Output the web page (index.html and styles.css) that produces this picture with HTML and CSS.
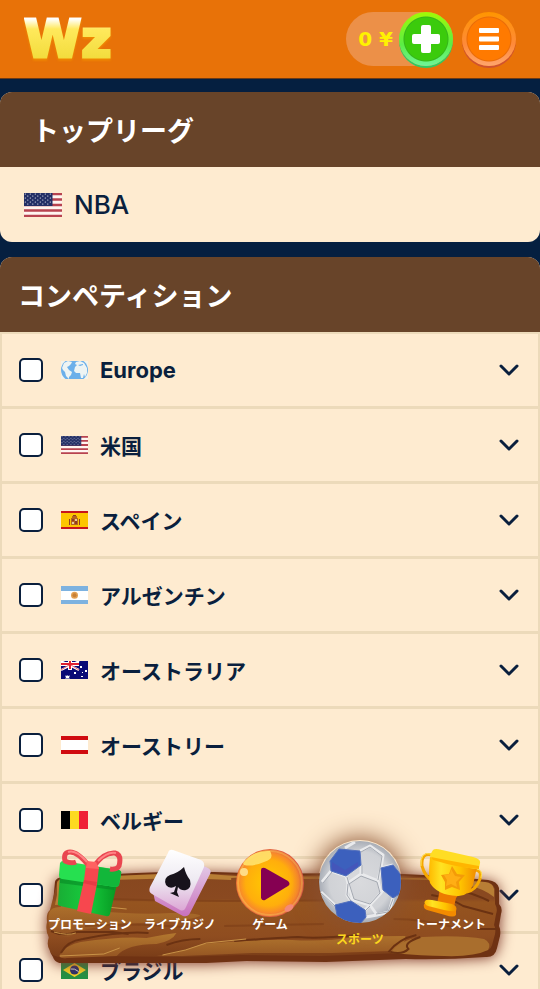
FILE: index.html
```html
<!DOCTYPE html>
<html lang="ja">
<head>
    <meta charset="UTF-8">
    <meta name="viewport" content="width=device-width, initial-scale=1">
    <title>Wz</title>
    <link rel="stylesheet" href="styles.css">
</head>
<body>

<!-- shared icons and flags -->
<svg class="sprite" aria-hidden="true">
    <defs>
        <pattern id="stars" width="5" height="4" patternUnits="userSpaceOnUse">
            <circle cx="1.3" cy="1" r=".6" fill="#fff"/>
            <circle cx="3.8" cy="3" r=".6" fill="#fff"/>
        </pattern>
    </defs>
    <symbol id="chevron" viewBox="0 0 20 12">
        <path d="M2 2l8 8 8-8" fill="none" stroke="#0a1f3d" stroke-width="3" stroke-linecap="round" stroke-linejoin="round"/>
    </symbol>
    <symbol id="flag-us" viewBox="0 0 38 24" preserveAspectRatio="none">
        <path fill="#fff5f0" d="M0 0h38v24H0z"/>
        <path stroke="#b8434f" stroke-width="2.4" d="M0 1h38M0 6.500h38M0 12h38M0 17.500h38M0 23h38"/>
        <path fill="#232f66" d="M0 0h28.500v13H0z"/>
        <path fill="url(#stars)" d="M0 0h28v12H0z"/>
    </symbol>
    <symbol id="flag-eu" viewBox="0 0 27 18">
        <path fill="#f4f3ea" d="M0 0h27v18H0z"/>
        <ellipse cx="13.500" cy="9" rx="13.500" ry="12" fill="#6cb0ea"/>
        <path fill="#eef4f3" d="M1 7L3 2l4-2 4 1-1 2-2 2-2 1 2 3 3 2-1 3-2 2 0 2-3-3-1-4-2-2zM15 1l4-1 4 2 3 5v5l-2 4-1-3-1 4-2 0-1-5-4 0-2-2 1-4 2-2-2-1z"/>
        <path fill="#6cb0ea" d="M17 4l5-1 0 1-3 1z"/>
    </symbol>
    <symbol id="flag-es" viewBox="0 0 27 18">
        <path fill="#c8141b" d="M0 0h27v18H0z"/>
        <path fill="#fdc500" d="M0 2h27v14H0z"/>
        <path fill="#b5651f" d="M10 7h7v7h-7zM11 5h5v2h-5z"/>
        <path fill="#8f3a24" d="M11 8h2v2h-2zM14 10h2v3h-2zM8 8h1v6H8zM18 8h1v6h-1zM12 4h3v1h-3z"/>
        <path fill="#e6c9a0" d="M14 8h2v2h-2zM11 11h2v2h-2z"/>
    </symbol>
    <symbol id="flag-ar" viewBox="0 0 27 18">
        <path fill="#7db2e0" d="M0 0h27v18H0z"/>
        <path fill="#fff" d="M0 5h27v9H0z"/>
        <circle cx="13.500" cy="9.300" r="3.500" fill="#e3a052"/>
        <circle cx="13.500" cy="9.300" r="2" fill="#c98035"/>
    </symbol>
    <symbol id="flag-au" viewBox="0 0 27 18">
        <path fill="#0a0a76" d="M0 0h27v18H0z"/>
        <path stroke="#fff" stroke-width="2" d="M0 0l18 9M18 0L0 9"/>
        <path stroke="#fff" stroke-width="4" d="M9 0v9M0 3h18"/>
        <path stroke="#e02030" stroke-width="2" d="M9 0v8M0 3h18"/>
        <path stroke="#e02030" stroke-width=".7" d="M10 4l8 5M8 4L0 9"/>
        <path fill="#fff" d="M6 14l1 1 2-.500-1 2 1 1H4l1-1-1-2 1.500.500zM13 11h2v2h-2zM19 5h2v2h-2zM24 9h2v2h-2zM20 15h2v1h-2zM21 11h1v1h-1z"/>
    </symbol>
    <symbol id="flag-at" viewBox="0 0 27 18">
        <path fill="#d00b10" d="M0 0h27v18H0z"/>
        <path fill="#fff" d="M0 4h27v10H0z"/>
    </symbol>
    <symbol id="flag-be" viewBox="0 0 27 18">
        <path d="M0 0h9v18H0z"/>
        <path fill="#fdda20" d="M9 0h9v18H9z"/>
        <path fill="#ef2035" d="M18 0h9v18h-9z"/>
    </symbol>
    <symbol id="flag-br" viewBox="0 0 27 18">
        <path fill="#229244" d="M0 0h27v18H0z"/>
        <path fill="#f5d426" d="M2 9l11.500-7L25 9l-11.500 7z"/>
        <circle cx="13.500" cy="9" r="4.500" fill="#26316f"/>
        <path d="M9.500 8q4-1 8 2.500" fill="none" stroke="#dfe8ea"/>
    </symbol>
</svg>

<header class="header">
    <a class="logo" href="#">Wz</a>
    <div class="account">
        <div class="balance">
            <span class="balance-value">0 ¥</span>
            <button class="round-btn deposit" aria-label="入金">
                <svg width="28" height="28" viewBox="0 0 28 28"><path fill="#fff" d="M11 0h6q2 0 2 2v7h7q2 0 2 2v6q0 2-2 2h-7v7q0 2-2 2h-6q-2 0-2-2v-7H2q-2 0-2-2v-6q0-2 2-2h7V2q0-2 2-2z"/></svg>
            </button>
        </div>
        <button class="round-btn menu" aria-label="メニュー">
            <svg width="22" height="22" viewBox="0 0 22 22"><path fill="#fff" d="M2 0h18q1 0 1 1v3q0 1-1 1H2Q1 5 1 4V1q0-1 1-1zM2 8.500h18q1 0 1 1v3q0 1-1 1H2q-1 0-1-1v-3q0-1 1-1zM2 17h18q1 0 1 1v3q0 1-1 1H2q-1 0-1-1v-3q0-1 1-1z"/></svg>
        </button>
    </div>
</header>

<main class="content">
    <section class="card top-leagues">
        <h2 class="card-title">トップリーグ</h2>
        <a class="league" href="#">
            <svg class="league-flag"><use href="#flag-us"/></svg>
            <span>NBA</span>
        </a>
    </section>

    <section class="card">
        <h2 class="card-title">コンペティション</h2>
        <ul class="list">
            <li class="row">
                <label class="country"><input type="checkbox" class="check"><svg class="flag"><use href="#flag-eu"/></svg><span class="latin">Europe</span></label>
                <button class="toggle" aria-label="開く"><svg width="20" height="12"><use href="#chevron"/></svg></button>
            </li>
            <li class="row">
                <label class="country"><input type="checkbox" class="check"><svg class="flag"><use href="#flag-us"/></svg><span>米国</span></label>
                <button class="toggle" aria-label="開く"><svg width="20" height="12"><use href="#chevron"/></svg></button>
            </li>
            <li class="row">
                <label class="country"><input type="checkbox" class="check"><svg class="flag"><use href="#flag-es"/></svg><span>スペイン</span></label>
                <button class="toggle" aria-label="開く"><svg width="20" height="12"><use href="#chevron"/></svg></button>
            </li>
            <li class="row">
                <label class="country"><input type="checkbox" class="check"><svg class="flag"><use href="#flag-ar"/></svg><span>アルゼンチン</span></label>
                <button class="toggle" aria-label="開く"><svg width="20" height="12"><use href="#chevron"/></svg></button>
            </li>
            <li class="row">
                <label class="country"><input type="checkbox" class="check"><svg class="flag"><use href="#flag-au"/></svg><span>オーストラリア</span></label>
                <button class="toggle" aria-label="開く"><svg width="20" height="12"><use href="#chevron"/></svg></button>
            </li>
            <li class="row">
                <label class="country"><input type="checkbox" class="check"><svg class="flag"><use href="#flag-at"/></svg><span>オーストリー</span></label>
                <button class="toggle" aria-label="開く"><svg width="20" height="12"><use href="#chevron"/></svg></button>
            </li>
            <li class="row">
                <label class="country"><input type="checkbox" class="check"><svg class="flag"><use href="#flag-be"/></svg><span>ベルギー</span></label>
                <button class="toggle" aria-label="開く"><svg width="20" height="12"><use href="#chevron"/></svg></button>
            </li>
            <li class="row">
                <label class="country"><input type="checkbox" class="check"></label>
                <button class="toggle" aria-label="開く"><svg width="20" height="12"><use href="#chevron"/></svg></button>
            </li>
            <li class="row">
                <label class="country"><input type="checkbox" class="check"><svg class="flag"><use href="#flag-br"/></svg><span>ブラジル</span></label>
                <button class="toggle" aria-label="開く"><svg width="20" height="12"><use href="#chevron"/></svg></button>
            </li>
        </ul>
    </section>
</main>

<nav class="nav">
    <!-- wooden board -->
    <svg class="board" viewBox="0 0 460 94" preserveAspectRatio="none" aria-hidden="true">
        <defs>
            <linearGradient id="wood" x2="0" y2="1">
                <stop offset="0" stop-color="#87471f"/>
                <stop offset=".3" stop-color="#8a4920"/>
                <stop offset=".34" stop-color="#95541f"/>
                <stop offset=".75" stop-color="#8f4d20"/>
                <stop offset="1" stop-color="#7a3d18"/>
            </linearGradient>
            <linearGradient id="plank" x2="0" y2="1">
                <stop offset="0" stop-color="#b3782f"/>
                <stop offset="1" stop-color="#935322"/>
            </linearGradient>
        </defs>
        <path fill="#6f3213" d="M10 13q0-4 10-6L70 5q60-3 100-2 80 3 150 0l80 4 45 4q9 1 11 8l0 16q4 4 2 10l-2 12q2 4 1 10l-3 12q-2 10-12 9-40 3-80 2l-80 3-80-1-60 3-80-1-40 1q-12 0-14-7-5-6-2-14-4-6-2-16-1-10 3-13z"/>
        <path fill="url(#wood)" d="M12 14q0-4 10-5l48-2q60-3 100-2 80 3 150 0l78 4 44 4q8 1 10 7l0 15q3 5 1 10l-2 11q2 4 1 9l-3 11q-2 7-12 6-40 3-80 2l-80 3-80-1-60 2-80-1-40 1q-10 0-12-6-4-6-1-14-4-6-2-15-1-9 3-12z"/>
        <!-- upper rim -->
        <path fill="#b87e35" d="M12 14q0-4 10-5l48-2q60-3 95-2l12 1 30 2-20 1 0 2-50-2-70 2-30 3-9 10-4 11-14 1 2-10zM398 10l44 3q8 1 9 7l0 8q-10-8-24-11l-29-4z"/>
        <path fill="#a66b2c" d="M207 8l110-1 80 3 0 1-80-1-110 0z"/>
        <!-- left plank end -->
        <path fill="url(#plank)" d="M4 44q2-7 14-6 20 0 36 4 40 4 72 2 30 0 30 3-20 7-60 7-40 2-60 8l-12 6q-10 0-18-6-4-10-2-18z" opacity=".75"/>
        <!-- lower band -->
        <path fill="url(#plank)" d="M14 87q8-12 22-14 40-6 66-4 20-4 30-5-4 8-20 11-30 0-40 12l-50 2q-6 1-8-2zM112 87q20-2 46-12 60-5 90-4 30 2 64-3 20-1 50-1 0 10-14 15l-60 2-80 0-70 3z"/>
        <path fill="#a96e2d" d="M347 84q10-14 32-16 40-2 62 2 8 4 4 11-14 7-44 6-20 0-54-3z"/>
        <path fill="none" stroke="#6b3212" stroke-width="2" d="M6 62q12 6 26 1l36 0 16 2M16 84q6-12 22-14 40-8 66-6M122 76q16-6 34-6M190 72q40-3 64-4 20 2 60-2M345 83q10-13 28-17M347 83q12 3 18-3-6-6 12-12M388 26q20 3 32 11l30 8M412 20q20 5 34 12M434 60l20 0"/>
        <path fill="none" stroke="#7b3d18" stroke-width="2" opacity=".6" d="M60 30q60 2 120 2l160-1M40 57q50-4 110 2M180 57l100-2M350 50q30 0 60 8"/>
        <path fill="none" stroke="#c99347" d="M15 87l44-2 16-6M118 86q24-4 44-12l40-4M16 37l26-1 40 4M9 63q14 4 22 1"/>
    </svg>

    <a class="nav-item" href="#">
        <svg class="nav-icon" viewBox="0 0 68 68">
            <defs>
                <linearGradient id="green"><stop stop-color="#19ad35"/><stop offset=".5" stop-color="#16cc3d"/><stop offset="1" stop-color="#079822"/></linearGradient>
            </defs>
            <path fill="url(#green)" d="M4 26l57 9-7 30q-1 3-4 2L4 57q-3-1-2-4z"/>
            <path fill="#078924" opacity=".6" d="M4 29l55 8-1 4L4 34z"/>
            <path fill="#26e050" d="M7 12l56 9q3 1 2 4l-2 11q-1 2-4 2L6 30q-3-1-3-4l1-12q1-2 3-2z"/>
            <path fill="#12b73a" d="M42 18l21 3q3 1 2 4l-2 11q-1 2-4 2l-19-3z"/>
            <path fill="#f7474e" d="M30 16l13 2-2 17-6 30-14-3 7-31z"/>
            <path fill="#d72d3a" opacity=".5" d="M28 31l13 2-1 4-13-3z"/>
            <path fill="none" stroke="#e94650" stroke-width="5" stroke-linejoin="round" d="M33 17Q22 3 14 3 7 3 9 12q6 3 11 1M38 17Q48 3 59 4q7 2 4 13-2 4-9 3"/>
            <path fill="none" stroke="#ff8384" stroke-width="2" d="M12 3q8-3 19 10M42 12Q52 2 60 4"/>
            <path fill="#ff6161" d="M31 12l9 1 3 7-13-1z"/>
        </svg>
        <span>プロモーション</span>
    </a>
    <a class="nav-item" href="#">
        <svg class="nav-icon" viewBox="0 0 68 68">
            <defs>
                <linearGradient id="card" x2="0" y2="1"><stop stop-color="#fff"/><stop offset=".5" stop-color="#eeeaf2"/><stop offset="1" stop-color="#dca7d5"/></linearGradient>
                <linearGradient id="card-side" x2="0" y2="1"><stop stop-color="#eadff0"/><stop offset="1" stop-color="#c871bc"/></linearGradient>
            </defs>
            <path fill="url(#card-side)" d="M29 4l33 15q4 2 2 6L44 64q-2 4-7 3L9 52l-2-9z"/>
            <path fill="url(#card)" d="M27 1l28 10q4 2 3 7L40 58q-2 5-6 3L6 45q-4-2-2-7L22 4q1-4 5-3z"/>
            <path fill="#17121b" d="M38 18q2 8 6 13 2 8-4 10-5 1-8-3l-1 5 2 5-9-4 4-1 2-6q-6 4-10-1-3-7 4-10 8-2 14-8z"/>
        </svg>
        <span>ライブカジノ</span>
    </a>
    <a class="nav-item" href="#">
        <svg class="nav-icon" viewBox="0 0 68 68">
            <defs>
                <radialGradient id="ball" cx=".48" cy=".5" r=".52"><stop stop-color="#ffcb00"/><stop offset=".65" stop-color="#ffae0c"/><stop offset=".85" stop-color="#f8892b"/><stop offset="1" stop-color="#d95448"/></radialGradient>
            </defs>
            <circle cx="34" cy="34" r="34" fill="url(#ball)"/>
            <circle cx="34" cy="34" r="32" fill="none" stroke="#ffd45a" stroke-width="2" opacity=".4"/>
            <path fill="#ffe36c" opacity=".9" d="M7 14Q17 1 34 2q5 8-6 11-12 5-20 3z"/>
            <circle cx="8" cy="23" r="4" fill="#ffdc86"/>
            <ellipse cx="53" cy="59" rx="5" ry="3" fill="#f38978" transform="rotate(-35 53 59)"/>
            <path fill="#850052" d="M25 21q0-3 4-2l23 13q3 3 0 5L29 51q-3 1-4-2z"/>
        </svg>
        <span>ゲーム</span>
    </a>
    <a class="nav-item active" href="#">
        <svg class="nav-icon" viewBox="0 0 84 84">
            <defs>
                <radialGradient id="soccer"><stop stop-color="#d9dadd"/><stop offset=".75" stop-color="#d0d2d6"/><stop offset="1" stop-color="#a8adb6"/></radialGradient>
                <clipPath id="soccer-clip"><circle cx="42" cy="42" r="41"/></clipPath>
            </defs>
            <circle cx="42" cy="42" r="41" fill="url(#soccer)"/>
            <g clip-path="url(#soccer-clip)" stroke-linejoin="round">
                <path fill="none" stroke="#e9eaec" stroke-width="3" d="M28 36l2 7 13-9 17 7 3 12-11 12-17-5-5-17M43 25v9M42 11l10-5 13 9-2 13-3 12M63 28l12-3M13 31L4 42M13 31l15 5M30 43l-1 12 4 6M35 60l-2 1M17 65L3 52M52 65l-5 5M63 53l2-3M75 58l-4 14-12 3-11 2M52 65l7 10M27 8l10-6"/>
                <path fill="none" stroke="#a3a8b0" d="M29 37l2 7 12-8 16 6 3 11-10 11-16-5-5-16M44 25v9M43 12l9-5 12 9-2 12-2 12M14 32L5 43M30 44l-1 11 4 6M17 66L3 53M52 66l-5 5M75 59l-5 13-12 2"/>
                <path fill="#3c60bd" stroke="#5370bd" d="M12 21l9-12 21 2 1 14-15 11-15-5zM63 28l12-3 8 10v18l-8 5-10-8zM17 65l16-4 14 9 1 7-6 7-22-4z"/>
                <path fill="#5345b5" opacity=".35" d="M14 22l13 8 13-8v4L28 35l-14-5z"/>
            </g>
        </svg>
        <span>スポーツ</span>
    </a>
    <a class="nav-item" href="#">
        <svg class="nav-icon" viewBox="0 0 68 68">
            <defs>
                <linearGradient id="gold"><stop stop-color="#ffba00"/><stop offset=".25" stop-color="#ffe323"/><stop offset=".65" stop-color="#ffc400"/><stop offset="1" stop-color="#f18b00"/></linearGradient>
            </defs>
            <path fill="none" stroke="#f5a700" stroke-width="3" d="M16 6Q5 3 6 17q3 11 11 15M60 21q6 1 4 9-4 11-13 13"/>
            <path fill="none" stroke="#ffe257" d="M15 5Q4 2 5 17M61 20q6 1 4 9"/>
            <path fill="#ed7b00" d="M24 38l21 5-5 6-2 9-17-3 2-10z"/>
            <path fill="url(#gold)" d="M14 8l47 10-4 18q-5 12-16 11-20-1-27-13-2-7 0-26z"/>
            <path fill="#ffdd24" d="M17 1q2-2 9 0l31 7q8 2 7 6l-1 5q-3 2-14-1L20 11q-6-2-6-5z"/>
            <path fill="#ffb500" d="M15 8q20 4 48 9l0 3q-20-1-46-9z"/>
            <path fill="#f49b08" d="M36 17l5 8 8 1-6 7 1 8-8-3-7 3 0-8-4-7 8-1z"/>
            <path fill="#ffae14" d="M35 20l4 7 6 1-5 5 1 5-6-3-5 2 1-6-3-5 6-1z"/>
            <path fill="#f38b00" d="M8 55l32 6v5q-2 3-11 0L11 61q-4-1-3-6z"/>
            <path fill="url(#gold)" d="M9 52q1-2 7-1l20 4q6 2 4 7-3 1-12-1l-16-4q-5-2-3-5z"/>
        </svg>
        <span>トーナメント</span>
    </a>
</nav>

</body>
</html>
```

FILE: styles.css
```css
* {
    box-sizing: border-box;
}
body {
    display: flex;
    flex-direction: column;
    position: relative;
    height: 100vh;
    margin: 0;
    overflow: hidden;
    background: #051f40;
    color: #0a1f3d;
    font-family: Inter, "Noto Sans CJK JP", sans-serif;
}
a {
    color: inherit;
    text-decoration: none;
}
button {
    padding: 0;
    border: 0;
    background: none;
    cursor: pointer;
}
svg {
    display: block;
}
.sprite {
    position: absolute;
    width: 0;
    height: 0;
}

/* header */
.header {
    display: flex;
    flex-shrink: 0;
    align-items: center;
    justify-content: space-between;
    height: 79px;
    padding: 0 24px;
    background: #e87208;
    border-bottom: 1px solid #6b3a17;
}
.logo {
    font-family: "DejaVu Sans", sans-serif;
    font-size: 52px;
    font-weight: 700;
    line-height: 60px;
    color: transparent;
    background: linear-gradient(#fff 10px, #ffe95c 20px, #f2dc3c 50px);
    background-clip: text;
    -webkit-background-clip: text;
    -webkit-text-stroke: 3px transparent;
    filter: drop-shadow(0 2px 1px #f08a00);
}
.account {
    display: flex;
    align-items: center;
    gap: 9px;
}
.balance {
    display: flex;
    align-items: center;
    gap: 6px;
    height: 54px;
    padding-left: 12px;
    border-radius: 27px;
    background: #ec9048;
}
.balance-value {
    color: #fff200;
    font-family: "DejaVu Sans", sans-serif;
    font-size: 20px;
    font-weight: 700;
}
.round-btn {
    display: flex;
    align-items: center;
    justify-content: center;
    width: 54px;
    height: 54px;
    border-radius: 50%;
}
.deposit {
    background: radial-gradient(circle, #3bcb0c 21px, #35b51a 22px, transparent 23px), linear-gradient(#a2fa04, #5aee45 60%, #6ff59a);
    box-shadow: 0 2px 0 #2fca63;
}
.menu {
    background: radial-gradient(circle, #ff7a00 21px, #e96c08 22px, transparent 23px), linear-gradient(#ff9500, #ff8a3a 60%, #ffa56d);
    box-shadow: 0 2px 0 #cf5230;
}

/* cards */
.content {
    flex: 1;
    min-height: 0;
    padding-top: 13px;
    overflow-y: auto;
    scrollbar-width: none;
}
.card {
    margin-bottom: 15px;
    overflow: hidden;
    border-radius: 12px;
    background: #feebd0;
}
.card-title {
    margin: 0;
    padding: 20px 18px 15px;
    background: #684429;
    color: #fff;
    font-size: 27px;
    font-weight: 700;
    line-height: 40px;
}
.top-leagues .card-title {
    padding-left: 32px;
}
.league {
    display: flex;
    align-items: center;
    gap: 12px;
    height: 75px;
    padding: 0 24px;
    font-size: 26px;
    font-weight: 500;
}
.league-flag {
    width: 38px;
    height: 24px;
}
.list {
    margin: 0;
    padding: 0;
    border: 2px solid #ecdaba;
    list-style: none;
}
.row {
    display: flex;
    align-items: center;
    justify-content: space-between;
    height: 75px;
    padding: 0 19px 0 17px;
    border-bottom: 3px solid #ecdaba;
}
.country {
    display: flex;
    align-items: center;
    font-size: 21px;
    font-weight: 600;
}
.latin {
    font-size: 22px;
    font-weight: 700;
}
.check {
    appearance: none;
    width: 24px;
    height: 24px;
    margin: 0 18px 0 0;
    border: 2px solid #0a1f3d;
    border-radius: 5px;
    background: #fff;
}
.flag {
    width: 27px;
    height: 18px;
    margin-right: 12px;
}

/* bottom navigation */
.nav {
    display: flex;
    align-items: flex-start;
    position: absolute;
    right: 45px;
    bottom: 26px;
    left: 45px;
    padding-bottom: 15px;
}
.board {
    position: absolute;
    right: -8px;
    bottom: 0;
    left: 0;
    width: calc(100% + 8px);
    height: 94px;
    filter: drop-shadow(0 1px 7px #80392b);
}
.nav-item {
    display: flex;
    flex: 1;
    flex-direction: column;
    align-items: center;
    position: relative;
    margin-top: 9px;
    color: #fff;
    font-size: 12px;
    font-weight: 600;
    line-height: 16px;
    white-space: nowrap;
}
.nav-icon {
    width: 68px;
    height: 68px;
}
.active {
    gap: 8px;
    margin-top: 0;
    color: #fbd71e;
}
.active .nav-icon {
    width: 84px;
    height: 84px;
    border-radius: 50%;
    box-shadow: 0 0 24px 2px #8b5232;
}
```
